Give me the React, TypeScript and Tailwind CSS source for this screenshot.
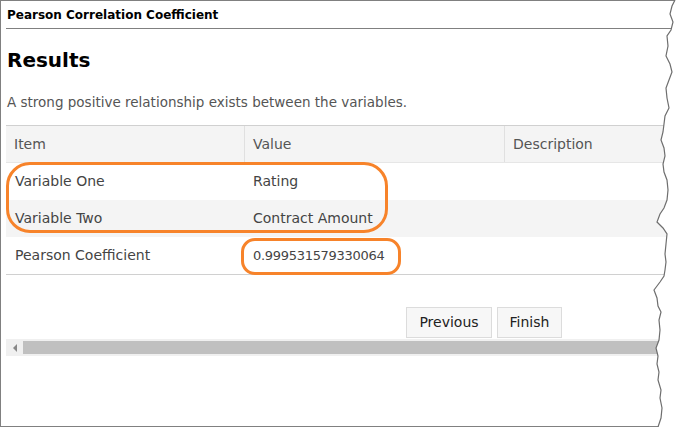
const rows = [
  { item: "Variable One", value: "Rating", desc: "", num: false },
  { item: "Variable Two", value: "Contract Amount", desc: "", num: false },
  { item: "Pearson Coefficient", value: "0.999531579330064", desc: "", num: true },
];

const tear =
  "M675,0 L672,6 L670,14 L673,22 L671,30 L667,36 L668,46 L666,56 L670,64 L672,72 L669,80 L666,88 L667,98 L669,108 L665,116 L664,124 L663,132 L661,140 L664,148 L665,156 L663,164 L664,172 L667,180 L668,190 L667,200 L664,208 L660,214 L657,222 L663,228 L667,234 L666,244 L665,254 L666,262 L665,270 L664,276 L660,282 L654,290 L657,298 L658,306 L661,312 L659,320 L660,330 L659,340 L656,348 L658,356 L657,364 L659,372 L658,380 L661,390 L660,398 L662,408 L661,418 L658,427";

export default function App() {
  return (
    <div className="relative h-[427px] w-[681px] overflow-hidden bg-white font-['Century_Gothic','DejaVu_Sans',sans-serif] text-[#333]">
      <div className="h-full border-y border-l border-[#808080] pl-[5px]">
        <div className="flex h-[28px] items-center border-b border-[#808080] pl-px text-[12px] font-bold text-black">
          Pearson Correlation Coefficient
        </div>
        <h1 className="mt-[18px] pl-px text-[20px] font-bold leading-[26px] text-black">Results</h1>
        <p className="mt-[20px] pl-px text-[13.5px] leading-[18px] text-[#555]">
          A strong positive relationship exists between the variables.
        </p>
        <div className="mt-[14px] w-[670px] border-y border-[#d0d0d0] text-[14px] text-[#444]">
          <div className="flex h-[37px] items-center border-b border-[#e6e6e6] bg-[#f4f4f4] text-[#555]">
            <div className="flex h-full w-[239px] items-center border-r border-[#e0e0e0] pl-[8px]">Item</div>
            <div className="flex h-full w-[260px] items-center border-r border-[#e0e0e0] pl-[8px]">Value</div>
            <div className="flex h-full flex-1 items-center pl-[8px]">Description</div>
          </div>
          {rows.map((r, i) => (
            <div key={r.item} className={`flex h-[37px] items-center ${i % 2 === 1 ? "bg-[#f4f4f4]" : "bg-white"}`}>
              <div className="w-[239px] pl-[9px]">{r.item}</div>
              <div className={`w-[260px] pl-[8px] ${r.num ? "text-[13px] tracking-[-0.3px]" : ""}`}>{r.value}</div>
              <div className="flex-1 pl-[8px]">{r.desc}</div>
            </div>
          ))}
        </div>
        <div className="mt-[32px] flex w-[556px] justify-end gap-[5px]">
          <button className="h-[31px] w-[86px] border border-[#dcdcdc] bg-[#f7f7f7] text-[14px] text-[#222]">Previous</button>
          <button className="h-[31px] w-[65px] border border-[#dcdcdc] bg-[#f7f7f7] text-[14px] text-[#222]">Finish</button>
        </div>
        <div className="mt-px flex h-[17px] w-[660px] items-center bg-[#f0f0f0]">
          <div className="flex w-[17px] justify-center">
            <span className="h-0 w-0 border-y-[4px] border-r-[4px] border-y-transparent border-r-[#888]" />
          </div>
          <div className="h-[13px] flex-1 bg-[#c0c0c0]" />
        </div>
      </div>

      {/* annotations */}
      <div className="absolute left-[6px] top-[162px] h-[71px] w-[382px] rounded-[24px] border-[3px] border-[#f7832a]" />
      <div className="absolute left-[241px] top-[238px] h-[37px] w-[160px] rounded-[14px] border-[3px] border-[#f7832a]" />

      {/* torn edge */}
      <svg className="absolute inset-0" width="681" height="427" viewBox="0 0 681 427">
        <path d={`${tear} L681,427 L681,0 Z`} fill="#fff" />
        <path d={tear} fill="none" stroke="#6e6e6e" strokeWidth="1.2" />
      </svg>
    </div>
  );
}
